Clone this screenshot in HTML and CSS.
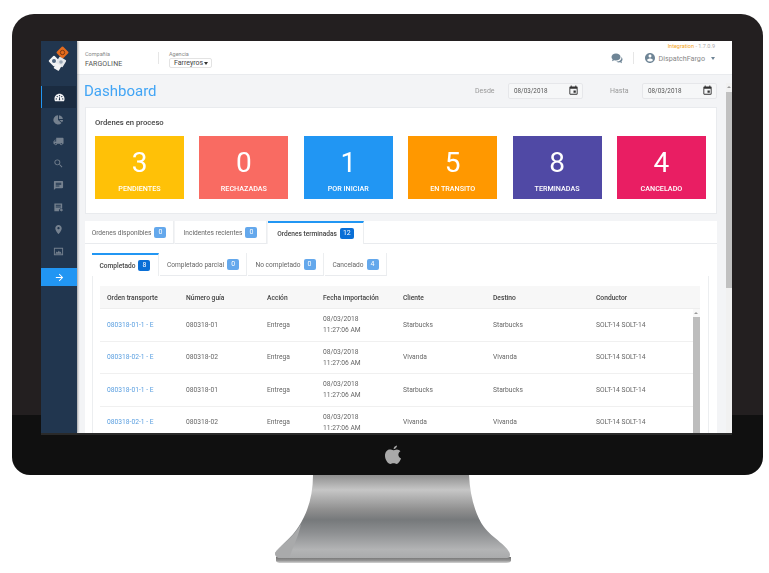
FILE: index.html

```html
<!DOCTYPE html>
<html lang="es">
<head>
  <meta charset="UTF-8">
  <title>Dashboard</title>
  <link rel="stylesheet" href="styles.css">
</head>
<body>
  <div class="monitor">
    <div class="screen">
      <aside class="sidebar">
        <div class="logo">
          <svg width="24" height="28" viewBox="0 0 24 28">
            <rect x="11" y="4" width="9" height="9" rx="1" transform="rotate(45 15.500 8.500)" fill="#e36b1e"/>
            <circle cx="15.500" cy="8.500" r="2.200" fill="none" stroke="#7d3a12" stroke-width="1"/>
            <rect x="3" y="13" width="8" height="8" rx="1" transform="rotate(45 7 17)" fill="#f2f3f4"/>
            <rect x="10" y="14" width="8" height="8" rx="1" transform="rotate(30 14 18)" fill="#e4e7ea"/>
            <rect x="7.500" y="20" width="6" height="6" rx="1" transform="rotate(30 10.500 23)" fill="#f2f3f4"/>
            <circle cx="7" cy="17" r="2" fill="#50667f"/>
            <circle cx="14" cy="18" r="1.800" fill="#9aa7b5"/>
          </svg>
        </div>
        <nav class="side-nav">
          <a class="side-item active"><svg viewBox="0 0 24 24"><path d="M12 4C5.900 4 1 8.900 1 15c0 2 .5 3.600 1.400 5h19.200c.9-1.400 1.400-3 1.400-5 0-6.100-4.900-11-11-11zm-7 12.500a1.500 1.500 0 1 1 0-3 1.500 1.500 0 0 1 0 3zm2-5a1.500 1.500 0 1 1 0-3 1.500 1.500 0 0 1 0 3zm5-2a1.500 1.500 0 1 1 0-3 1.500 1.500 0 0 1 0 3zm1.500 8.500h-3l1-7h1zm3.500-6.500a1.500 1.500 0 1 1 0-3 1.500 1.500 0 0 1 0 3zm2 5a1.500 1.500 0 1 1 0-3 1.500 1.500 0 0 1 0 3z"/></svg></a>
          <a class="side-item"><svg viewBox="0 0 24 24"><path d="M11 3v10l7.500 6.500A10 10 0 1 1 11 3z"/><path d="M13 2.500A10 10 0 0 1 21.500 11H13z"/><path d="M13.500 13H22a10 10 0 0 1-2.200 5.200z"/></svg></a>
          <a class="side-item"><svg viewBox="0 0 24 24"><g transform="matrix(-1 0 0 1 24 0)"><path d="M20 8h-3V4H3c-1.100 0-2 .9-2 2v11h2c0 1.660 1.340 3 3 3s3-1.340 3-3h6c0 1.660 1.340 3 3 3s3-1.340 3-3h2v-5l-3-4zM6 18.500c-.83 0-1.500-.67-1.500-1.500s.67-1.500 1.500-1.500 1.500.67 1.500 1.500-.67 1.500-1.500 1.500zm13.500-9l1.960 2.500H17V9.500h2.500zm-1.500 9c-.83 0-1.500-.67-1.500-1.500s.67-1.500 1.500-1.500 1.500.67 1.500 1.500-.67 1.500-1.500 1.500z"/></g></svg></a>
          <a class="side-item"><svg viewBox="0 0 24 24"><path d="M15.500 14h-.79l-.28-.27C15.410 12.590 16 11.110 16 9.500 16 5.910 13.090 3 9.500 3S3 5.910 3 9.500 5.910 16 9.500 16c1.610 0 3.090-.59 4.230-1.570l.27.28v.79l5 4.990L20.490 19l-4.990-5zm-6 0C7.010 14 5 11.990 5 9.500S7.010 5 9.500 5 14 7.010 14 9.500 11.990 14 9.500 14z"/></svg></a>
          <a class="side-item"><svg viewBox="0 0 24 24"><path d="M20 2H4c-1.100 0-1.990.9-1.990 2L2 22l4-4h14c1.100 0 2-.9 2-2V4c0-1.100-.9-2-2-2zM6 9h12v2H6V9zm8 5H6v-2h8v2zm4-6H6V6h12v2z"/></svg></a>
          <a class="side-item"><svg viewBox="0 0 24 24"><path d="M3 3h17v11h-5v2h-2v4H3V3zm3 3v2h11V6H6zm0 4v2h11v-2H6zm9 6h3v-2l4 3.500-4 3.500v-2h-3v-3z"/></svg></a>
          <a class="side-item"><svg viewBox="0 0 24 24"><path d="M12 2C8.130 2 5 5.130 5 9c0 5.250 7 13 7 13s7-7.750 7-13c0-3.870-3.130-7-7-7zm0 9.500c-1.380 0-2.500-1.120-2.500-2.500s1.120-2.500 2.500-2.500 2.500 1.120 2.500 2.500-1.120 2.500-2.500 2.500z"/></svg></a>
          <a class="side-item"><svg viewBox="0 0 24 24"><path d="M2 4h20v16H2V4zm2 14h16V6H4v12zm1-1l3-5 2 2 3-4 2 4 1-2 3 5H5z" fill-rule="evenodd"/></svg></a>
          <a class="side-toggle"><svg viewBox="0 0 24 24"><path d="M12 4l-1.410 1.410L16.170 11H4v2h12.170l-5.580 5.590L12 20l8-8z"/></svg></a>
        </nav>
      </aside>

      <div class="main">
        <header class="topbar">
          <div class="field-group">
            <span class="field-label">Compañía</span>
            <span class="field-value">FARGOLINE</span>
          </div>
          <div class="field-group agency">
            <span class="field-label">Agencia</span>
            <span class="fake-select">Farreyros <i class="caret"></i></span>
          </div>
          <div class="user-area">
            <div class="version"><b>Integration</b> - 1.7.0.9</div>
            <svg class="chat-icon" viewBox="0 0 24 22"><path d="M10 1C4.800 1 1 4.200 1 8c0 1.800.8 3.400 2.200 4.700L2 16.500l4.400-1.800c1.100.3 2.300.5 3.600.5 5.200 0 9-3.200 9-7.200S15.200 1 10 1z"/><path d="M20.500 7.500c.3.600.5 1.300.5 2 0 4.500-4.500 7.500-9 7.500h-1.500c1.500 1.300 3.500 2 5.500 2 .8 0 1.600-.1 2.300-.3l3.700 1.600-1-3.200c1.300-1.100 2-2.600 2-4.100 0-2.400-1-4.300-2.500-5.500z"/></svg>
            <svg class="user-icon" viewBox="0 0 24 24"><path d="M12 2C6.480 2 2 6.480 2 12s4.480 10 10 10 10-4.480 10-10S17.520 2 12 2zm0 3c1.660 0 3 1.340 3 3s-1.340 3-3 3-3-1.340-3-3 1.340-3 3-3zm0 14.200c-2.500 0-4.710-1.280-6-3.220.03-1.990 4-3.080 6-3.080 1.990 0 5.970 1.090 6 3.080-1.290 1.940-3.500 3.220-6 3.220z"/></svg>
            <span class="user-name">DispatchFargo</span>
            <i class="caret user-caret"></i>
          </div>
        </header>

        <div class="content">
          <div class="page">
            <div class="page-head">
              <h1>Dashboard</h1>
              <span class="date-label">Desde</span>
              <div class="date-input">08/03/2018 <svg viewBox="0 0 24 24"><path d="M17 12h-5v5h5v-5zM16 1v2H8V1H6v2H5c-1.110 0-1.990.9-1.990 2L3 19c0 1.100.89 2 2 2h14c1.100 0 2-.9 2-2V5c0-1.100-.9-2-2-2h-1V1h-2zm3 18H5V8h14v11z"/></svg></div>
              <span class="date-label second">Hasta</span>
              <div class="date-input">08/03/2018 <svg viewBox="0 0 24 24"><path d="M17 12h-5v5h5v-5zM16 1v2H8V1H6v2H5c-1.110 0-1.990.9-1.990 2L3 19c0 1.100.89 2 2 2h14c1.100 0 2-.9 2-2V5c0-1.100-.9-2-2-2h-1V1h-2zm3 18H5V8h14v11z"/></svg></div>
            </div>

            <section class="panel">
              <h2>Ordenes en proceso</h2>
              <div class="cards">
                <div class="card amber"><strong>3</strong><span>PENDIENTES</span></div>
                <div class="card coral"><strong>0</strong><span>RECHAZADAS</span></div>
                <div class="card blue"><strong>1</strong><span>POR INICIAR</span></div>
                <div class="card orange"><strong>5</strong><span>EN TRANSITO</span></div>
                <div class="card indigo"><strong>8</strong><span>TERMINADAS</span></div>
                <div class="card pink"><strong>4</strong><span>CANCELADO</span></div>
              </div>
            </section>

            <div class="tabs outer-tabs">
              <div class="tab">Ordenes disponibles <em class="badge">0</em></div>
              <div class="tab">Incidentes recientes <em class="badge">0</em></div>
              <div class="tab active">Ordenes terminadas <em class="badge dark">12</em></div>
            </div>
            <section class="tab-panel">
              <div class="tabs inner-tabs">
                <div class="tab active">Completado <em class="badge dark">8</em></div>
                <div class="tab">Completado parcial <em class="badge">0</em></div>
                <div class="tab">No completado <em class="badge">0</em></div>
                <div class="tab">Cancelado <em class="badge">4</em></div>
              </div>
              <div class="inner-box">
                <div class="grid-head">
                  <span>Orden transporte</span>
                  <span>Número guía</span>
                  <span>Acción</span>
                  <span>Fecha importación</span>
                  <span>Cliente</span>
                  <span>Destino</span>
                  <span>Conductor</span>
                </div>
                <div class="grid-body">
                  <div class="rows">
                    <div class="row">
                      <a>080318-01-1 - E</a><span>080318-01</span><span>Entrega</span><span>08/03/2018<br>11:27:06 AM</span><span>Starbucks</span><span>Starbucks</span><span>SOLT-14 SOLT-14</span>
                    </div>
                    <div class="row">
                      <a>080318-02-1 - E</a><span>080318-02</span><span>Entrega</span><span>08/03/2018<br>11:27:06 AM</span><span>Vivanda</span><span>Vivanda</span><span>SOLT-14 SOLT-14</span>
                    </div>
                    <div class="row">
                      <a>080318-01-1 - E</a><span>080318-01</span><span>Entrega</span><span>08/03/2018<br>11:27:06 AM</span><span>Starbucks</span><span>Starbucks</span><span>SOLT-14 SOLT-14</span>
                    </div>
                    <div class="row">
                      <a>080318-02-1 - E</a><span>080318-02</span><span>Entrega</span><span>08/03/2018<br>11:27:06 AM</span><span>Vivanda</span><span>Vivanda</span><span>SOLT-14 SOLT-14</span>
                    </div>
                  </div>
                  <div class="table-scroll"><div class="thumb"></div></div>
                </div>
              </div>
            </section>
          </div>
          <div class="page-scroll"><div class="thumb"></div></div>
        </div>
      </div>
    </div>
    <div class="chin">
      <svg class="apple" viewBox="0 0 18 22"><path d="M13 1c.1 1.500-1.300 3.600-3.400 3.700C9.400 3 11 1.300 13 1z"/><path d="M9.300 5.800c.9 0 2-.9 3.600-.9 1.300 0 2.700.7 3.500 1.900-3 1.800-2.500 5.900.6 7.200-.8 2.300-2.600 5.500-4.500 5.500-1 0-1.500-.7-3-.7s-2 .7-3 .7C4 19.500 1 15.300 1 11.300 1 7.500 3.300 5.100 5.700 5.100c1.500 0 2.700.7 3.600.7z"/></svg>
    </div>
  </div>

  <svg class="stand" viewBox="0 475 769 98" width="769" height="98">
    <defs>
      <linearGradient id="neck" x1="0" y1="0" x2="0" y2="1">
        <stop offset="0" stop-color="#8f8f8f"/>
        <stop offset="0.18" stop-color="#c6c6c6"/>
        <stop offset="0.42" stop-color="#8f8f8f"/>
        <stop offset="0.54" stop-color="#76797b"/>
        <stop offset="0.7" stop-color="#8e9092"/>
        <stop offset="0.9" stop-color="#b3b4b5"/>
        <stop offset="1" stop-color="#aaabac"/>
      </linearGradient>
      <linearGradient id="foot" x1="0" y1="0" x2="0" y2="1">
        <stop offset="0" stop-color="#6f6f6f"/>
        <stop offset="0.6" stop-color="#969696"/>
        <stop offset="1" stop-color="#d4d4d4"/>
      </linearGradient>
    </defs>
    <path d="M276 557 L511 557 L511 561 Q510 563 506 563 L281 563 Q277 563 276 561 Z" fill="url(#foot)"/>
    <path d="M313 475 L469 475 C470 495 475 515 484 527 C492 538 510 547 510 555 Q510 558 507 558 L281 558 Q275 558 275 553 C278 547 292 538 299 526 C308 512 313 495 313 475 Z" fill="url(#neck)"/>
    <path d="M275 553 C281 546 293 538 301 524 C298 538 291 552 289 558 L281 558 Q275 558 275 553 Z" fill="#a9aaab"/>
  </svg>
</body>
</html>
```

FILE: styles.css

```css
* {
  box-sizing: border-box;
}

body {
  margin: 0;
  background: #fff;
  font-family: Roboto, sans-serif;
  color: #555;
  overflow: hidden;
}

.monitor {
  width: 751px;
  height: 461px;
  margin: 14px 0 0 12px;
  padding-top: 27px;
  border-radius: 22px 22px 18px 18px;
  background: linear-gradient(#231f20 401px, #101010 401px);
}

/* the reference is a scaled down screenshot, hence the slight blur */
.screen {
  display: flex;
  width: 691px;
  height: 392px;
  margin-left: 29px;
  overflow: hidden;
  background: #f3f4f6;
  box-shadow: 0 2px 0 #2a2a2a;
  filter: blur(0.3px);
}

/* sidebar */
.sidebar {
  width: 36px;
  flex: none;
  padding-right: 1px;
  background: #21364f;
  box-shadow: 1px 0 2px rgba(0,0,0,0.35);
  z-index: 1;
}

.logo {
  display: flex;
  justify-content: center;
  height: 45px;
  padding-top: 3px;
}

.side-item,
.side-toggle {
  display: flex;
  align-items: center;
  justify-content: center;
  height: 22px;
}

.side-item svg {
  width: 11px;
  height: 11px;
  fill: #75818f;
}

.side-item.active {
  background: #1a2b40;
  border-left: 1px solid #2196f3;
}

.side-item.active svg {
  fill: #f3f4f6;
}

.side-toggle {
  height: 18px;
  margin: 6px -1px 0 0;
  background: #2196f3;
}

.side-toggle svg {
  width: 11px;
  height: 11px;
  fill: #fff;
}

/* top bar */
.main {
  flex: 1;
  min-width: 0;
  display: flex;
  flex-direction: column;
}

.topbar {
  display: flex;
  height: 34px;
  flex: none;
  padding: 8px 0 0 8px;
  background: #fff;
  border-bottom: 1px solid #e9ebee;
}

.field-group {
  display: flex;
  flex-direction: column;
  width: 74px;
  height: 12px;
  margin-top: 3px;
  border-right: 1px solid #e6e6e6;
}

.field-group .field-label {
  margin-top: -1px;
}

.field-label {
  font-size: 5.5px;
  line-height: 6px;
  color: #888;
}

.field-value {
  margin-top: 3px;
  font-size: 7px;
  line-height: 8px;
  letter-spacing: 0.1px;
  color: #555;
}

.agency {
  margin-left: 10px;
  border: 0;
}

.fake-select {
  display: flex;
  align-items: center;
  justify-content: space-between;
  flex: none;
  width: 43px;
  height: 10px;
  margin-top: 1px;
  padding: 0 3px 0 4px;
  border: 1px solid #e3e3e3;
  border-radius: 2px;
  font-size: 7px;
  color: #444;
}

.caret {
  width: 0;
  height: 0;
  border: 2px solid transparent;
  border-top: 3px solid #333;
  border-bottom: 0;
}

.user-area {
  position: relative;
  display: flex;
  align-items: center;
  height: 18px;
  margin-left: auto;
  padding-right: 17px;
}

.version {
  position: absolute;
  top: -6px;
  right: 17px;
  font-size: 5.5px;
  color: #aaa;
  white-space: nowrap;
}

.version b {
  font-weight: 400;
  color: #f5a623;
}

.chat-icon {
  width: 12px;
  height: 11px;
  fill: #6f8596;
}

.user-icon {
  width: 12px;
  height: 12px;
  margin-left: 21px;
  fill: #6f8596;
}

.user-area::before {
  content: "";
  position: absolute;
  left: 22px;
  top: 3px;
  height: 12px;
  border-left: 1px solid #e6e6e6;
}

.user-name {
  margin-left: 3px;
  font-size: 7.2px;
  color: #888;
}

.user-caret {
  margin-left: 6px;
  border-top-color: #6f8596;
}

/* content */
.content {
  flex: 1;
  display: flex;
  min-height: 0;
}

.page {
  flex: 1;
  min-width: 0;
  padding: 7px 9px 0 8px;
  overflow: hidden;
}

.page-scroll {
  position: relative;
  width: 6px;
  flex: none;
  margin-top: 8px;
  padding-top: 9px;
  background: #f1f1f1;
}

.page-scroll .thumb {
  height: 196px;
  background: #c1c1c1;
}

.page-scroll::before,
.table-scroll::before {
  content: "";
  position: absolute;
  top: 3px;
  left: 1px;
  border: 2px solid transparent;
  border-bottom: 2px solid #999;
  border-top: 0;
}

.page-head {
  display: flex;
  align-items: center;
  height: 17px;
}

h1 {
  margin: 0 auto 0 -1px;
  font-size: 15px;
  font-weight: 400;
  color: #42a5f5;
}

.date-label {
  width: 33px;
  font-size: 7px;
  color: #999;
}

.date-label.second {
  width: 32px;
  margin-left: 27px;
}

.date-input {
  display: flex;
  align-items: center;
  justify-content: space-between;
  width: 75px;
  height: 16px;
  padding: 0 3px 0 5px;
  border: 1px solid #e6e7ea;
  border-radius: 2px;
  background: #f6f7f8;
  font-size: 6.3px;
  color: #555;
}

.date-input svg {
  width: 11px;
  height: 11px;
  fill: #333;
}

.panel {
  height: 107px;
  margin-top: 8px;
  padding: 10px 10px 0 9px;
  background: #fff;
  border: 1px solid #e9ebee;
}

h2 {
  margin: 0;
  font-size: 7.7px;
  line-height: 10px;
  font-weight: 500;
  color: #444;
}

.cards {
  display: flex;
  justify-content: space-between;
  margin-top: 8px;
}

.card {
  display: flex;
  flex-direction: column;
  align-items: center;
  width: 89px;
  height: 63px;
  color: #fff;
}

.card strong {
  margin-top: 10px;
  font-size: 28px;
  line-height: 34px;
  font-weight: 400;
}

.card span {
  margin-top: 4px;
  font-size: 7.2px;
  line-height: 9px;
  font-weight: 500;
}

.amber { background: #ffc107; }
.coral { background: #f96b62; }
.blue { background: #2196f3; }
.orange { background: #ff9800; }
.indigo { background: #5049a5; }
.pink { background: #e91e63; }

/* tabs */
.tabs {
  display: flex;
}

.outer-tabs {
  margin-top: 7px;
  height: 23px;
}

.tab {
  display: flex;
  align-items: center;
  justify-content: center;
  gap: 3px;
  margin-right: 1px;
  padding-top: 1px;
  background: #fff;
  border-bottom: 1px solid #e9ebee;
  border-right: 1px solid #eceef0;
  font-size: 6.6px;
  color: #666;
  white-space: nowrap;
}

.tab.active {
  padding-top: 0;
  border-top: 2px solid #2196f3;
  border-bottom: 0;
  font-weight: 500;
  color: #444;
}

.outer-tabs .tab:nth-child(1) { width: 89px; }
.outer-tabs .tab:nth-child(2) { width: 92px; }
.outer-tabs .tab:nth-child(3) { width: 96px; margin-right: 0; }

.outer-tabs::after {
  content: "";
  flex: 1;
  background: #fff;
  border-bottom: 1px solid #e9ebee;
}

.badge {
  display: inline-block;
  min-width: 12px;
  padding: 0 3px;
  height: 11px;
  line-height: 11px;
  border-radius: 2px;
  background: #64a8ec;
  color: #fff;
  font-size: 7px;
  font-style: normal;
  font-weight: 400;
  text-align: center;
}

.badge.dark {
  background: #0a6fd6;
}

.tab-panel {
  height: 200px;
  padding: 9px 8px 0 7px;
  background: #fff;
}

.inner-tabs {
  height: 23px;
}

.inner-tabs .tab:nth-child(1) { width: 67px; }
.inner-tabs .tab:nth-child(2) { width: 87px; }
.inner-tabs .tab:nth-child(3) { width: 76px; }
.inner-tabs .tab:nth-child(4) { width: 62px; }

.inner-box {
  height: 170px;
  padding: 10px 8px 0 7px;
  border: 1px solid #eceef0;
  border-top: 0;
  border-bottom: 0;
}

.grid-head,
.row {
  display: grid;
  grid-template-columns: 79px 81px 56px 80px 90px 103px 1fr;
  align-items: center;
  padding: 1px 0 0 7px;
  font-size: 6.7px;
}

.grid-head {
  height: 23px;
  background: #f7f7f7;
  border-bottom: 1px solid #eee;
  font-weight: 500;
  color: #444;
}

.grid-body {
  display: flex;
}

.rows {
  flex: 1;
  min-width: 0;
}

.row {
  height: 32.5px;
  border-bottom: 1px solid #f0f0f0;
  line-height: 11px;
  color: #666;
}

.row a {
  color: #5a9fe0;
}

.table-scroll {
  position: relative;
  width: 7px;
  flex: none;
  padding-top: 8px;
  background: #f8f8f8;
}

.table-scroll .thumb {
  height: 130px;
  background: #bdbdbd;
}

/* bezel */
.chin {
  display: flex;
  justify-content: center;
  padding: 11px 0 0 10px;
}

.apple {
  width: 18px;
  height: 23px;
  fill: #a9a9a9;
}

.stand {
  display: block;
}
```
